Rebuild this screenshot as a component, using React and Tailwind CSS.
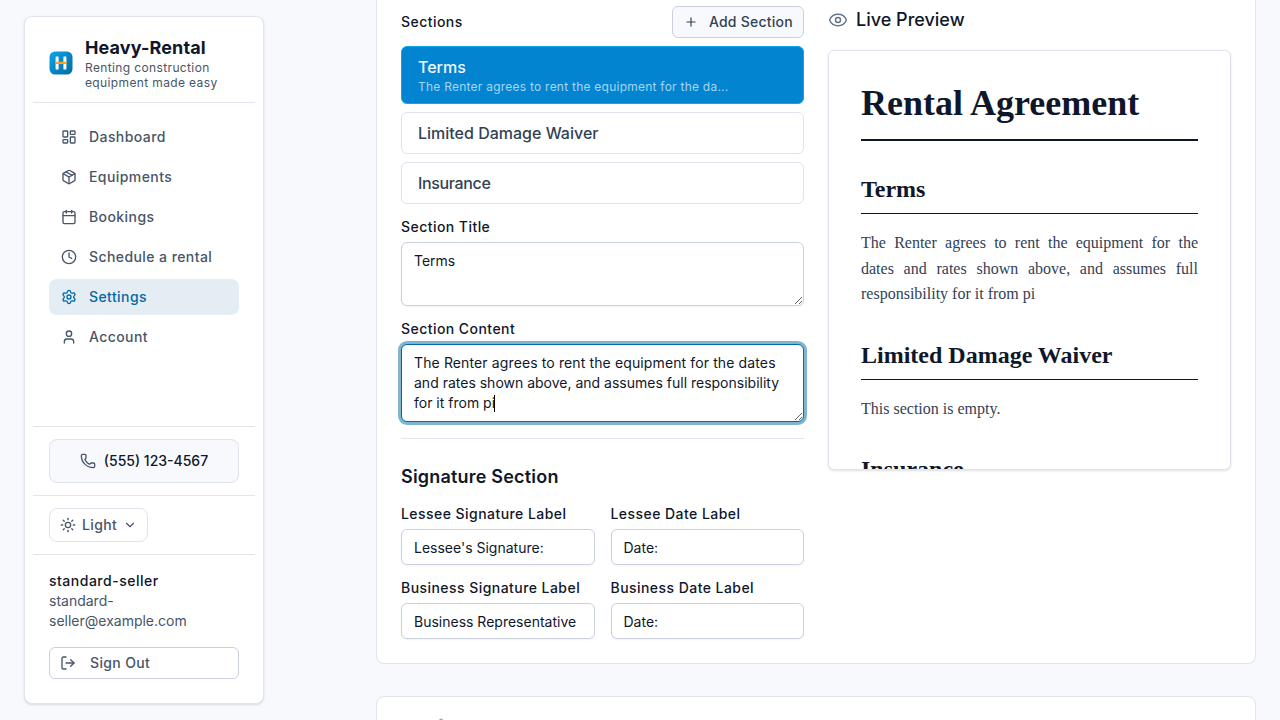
import React from 'react'
import {
  LayoutDashboard, Package, Calendar, Clock, Settings, User,
  Phone, Sun, ChevronDown, LogOut, Plus, Eye, Shield,
} from 'lucide-react'

const NAV = [
  { label: 'Dashboard', icon: LayoutDashboard },
  { label: 'Equipments', icon: Package },
  { label: 'Bookings', icon: Calendar },
  { label: 'Schedule a rental', icon: Clock },
  { label: 'Settings', icon: Settings, active: true },
  { label: 'Account', icon: User },
]

const CONTENT = 'The Renter agrees to rent the equipment for the dates and rates shown above, and assumes full responsibility for it from pi'

const SECTIONS = [
  { title: 'Terms', content: CONTENT },
  { title: 'Limited Damage Waiver', content: '' },
  { title: 'Insurance', content: '', className: 'tracking-[-0.35px]' },
]

const SIGNATURE_FIELDS = [
  { id: 'lesseeSig', label: 'Lessee Signature Label', value: "Lessee's Signature:" },
  { id: 'lesseeDate', label: 'Lessee Date Label', value: 'Date:' },
  { id: 'businessSig', label: 'Business Signature Label', value: 'Business Representative Signature:' },
  { id: 'businessDate', label: 'Business Date Label', value: 'Date:' },
]

function Logo() {
  return (
    <svg width="24" height="24" viewBox="0 0 24 24" className="shrink-0">
      <defs>
        <linearGradient id="logoBg" x1="0" y1="0" x2="1" y2="1">
          <stop offset="0" stopColor="#0ea5e9" />
          <stop offset="1" stopColor="#0369a1" />
        </linearGradient>
      </defs>
      <rect x="0.5" y="0.5" width="23" height="23" rx="5.5" fill="url(#logoBg)" />
      <rect x="6.6" y="5.6" width="3" height="12.8" rx="0.4" fill="#fff" />
      <rect x="14.4" y="5.6" width="3" height="12.8" rx="0.4" fill="#fff" />
      <rect x="6.6" y="10.8" width="11" height="2.2" rx="0.4" fill="#fba31a" />
    </svg>
  )
}

function Label({ children }) {
  return <div className="text-sm leading-none font-medium tracking-[0.45px] text-[#0f172a]">{children}</div>
}

function Sidebar() {
  return (
    <aside className="w-60 h-[688px] shrink-0 flex flex-col p-2 bg-white border border-[#dfe3ee] rounded-lg shadow-sm">
      <div className="flex items-center gap-3 px-4 py-3 border-b border-[#e2e5ee]">
        <Logo />
        <div>
          <div className="text-lg leading-tight font-bold tracking-[0.12px] text-[#0f172a]">Heavy-Rental</div>
          <div className="text-xs leading-tight tracking-[0.37px] text-[#475569]">Renting construction equipment made easy</div>
        </div>
      </div>

      <nav className="flex-1 flex flex-col gap-1 px-4 pt-4">
        {NAV.map(({ label, icon: Icon, active }) => (
          <a key={label} className={[
            'flex items-center gap-3 h-9 px-3 rounded-lg text-sm font-medium tracking-[0.42px]',
            active ? 'bg-[#e4edf4] text-[#0369a1]' : 'text-[#475569]',
          ].join(' ')}>
            <Icon size={16} />
            {label}
          </a>
        ))}
      </nav>

      <div className="px-4 py-3 border-t border-[#e2e5ee]">
        <div className="h-11 flex items-center justify-center gap-2 rounded-lg border border-[#dfe3ee] bg-[#f8f9fd] text-sm font-medium text-[#0f172a]">
          <Phone size={16} className="text-[#475569]" />
          (555) 123-4567
        </div>
      </div>

      <div className="px-4 py-3 border-t border-[#e2e5ee]">
        <button className="flex items-center gap-1.5 h-[34px] px-2.5 rounded-lg border border-[#dfe3ee] text-sm font-medium tracking-[0.35px] text-[#475569]">
          <Sun size={16} />
          Light
          <ChevronDown size={14} />
        </button>
      </div>

      <div className="px-4 py-4 border-t border-[#e2e5ee]">
        <div className="text-sm font-medium tracking-[0.5px] text-[#0f172a]">standard-seller</div>
        <div className="text-sm text-[#475569]">standard-<br />seller@example.com</div>
        <button className="mt-4 w-full h-8 flex items-center gap-3.5 px-2.5 rounded-md border border-[#cbd0e0] text-sm font-medium tracking-[0.35px] text-[#475569]">
          <LogOut size={16} />
          Sign Out
        </button>
      </div>
    </aside>
  )
}

function SectionEditor() {
  return (
    <div className="min-w-0">
      <div className="flex items-center justify-between">
        <Label>Sections</Label>
        <button className="h-8 flex items-center gap-[11px] pl-[11px] pr-2.5 rounded-md border border-[#cbd0e0] bg-[#f8f9fd] text-sm font-medium tracking-[0.25px] text-[#334155]">
          <Plus size={14} />
          Add Section
        </button>
      </div>

      <div className="mt-2 space-y-2">
        {SECTIONS.map((s, i) => (
          <div key={s.title} className={[
            'px-4 py-2 rounded-md border',
            i === 0 ? 'bg-[#0284d1] border-[#0ea5e9] text-[#f0f9ff]' : 'bg-white border-[#dfe3ee] text-[#334155]',
          ].join(' ')}>
            <div className={['text-base font-medium', s.className].join(' ')}>{s.title}</div>
            {s.content && <div className="text-xs tracking-[0.24px] text-[#a5d6f3]">{s.content.slice(0, 50)}...</div>}
          </div>
        ))}
      </div>

      <div className="mt-4 space-y-2">
        <Label>Section Title</Label>
        <textarea
          defaultValue="Terms"
          className="block w-full h-16 px-3 py-2 resize-y rounded-md border border-[#cbd0e0] bg-white text-sm text-[#0f172a] shadow-xs"
        />
      </div>

      <div className="mt-4 space-y-2">
        <Label>Section Content</Label>
        <div className="h-[78px] px-3 py-2 resize-y overflow-hidden rounded-md border border-[#0369a1] bg-white ring-3 ring-[#0369a1]/50 text-sm text-[#0f172a] first-line:tracking-[0.12px]">
          {CONTENT}
          <span className="inline-block w-px h-[17px] -ml-px align-[-4px] bg-black" />
        </div>
      </div>

      {/* Signature labels */}
      <div className="mt-4 pt-6 border-t border-[#e2e5ee]">
        <div className="text-lg font-semibold tracking-[0.2px] text-[#0f172a]">Signature Section</div>
        <div className="mt-4 grid grid-cols-2 gap-4">
          {SIGNATURE_FIELDS.map(f => (
            <div key={f.id} className="min-w-0 space-y-2">
              <Label>{f.label}</Label>
              <input
                type="text" defaultValue={f.value}
                className="block w-full h-9 pl-3 pr-3.5 rounded-md border border-[#cbd0e0] bg-white text-sm text-[#0f172a] shadow-xs"
              />
            </div>
          ))}
        </div>
      </div>
    </div>
  )
}

function Preview() {
  return (
    <div className="min-w-0">
      <div className="flex items-center gap-2 h-7 text-lg font-medium text-[#0f172a]">
        <Eye size={20} strokeWidth={1.75} className="text-[#64748b]" />
        Live Preview
      </div>
      <div className="mt-4 h-[420px] overflow-hidden p-8 rounded-md border border-[#dfe3ee] bg-white shadow-sm font-['Liberation_Serif',serif]">
        <h1 className="pb-4 border-b-2 border-[#0f172a] text-4xl font-bold text-[#0f172a]">Rental Agreement</h1>
        {SECTIONS.map(s => (
          <div key={s.title} className="mt-8">
            <h2 className="pb-2 border-b border-[#0f172a] text-2xl font-bold text-[#0f172a]">{s.title}</h2>
            <p className="mt-4 text-base leading-[1.6] text-justify text-[#334155]">{s.content || 'This section is empty.'}</p>
          </div>
        ))}
      </div>
    </div>
  )
}

export default function App() {
  return (
    <div className="w-[1280px] h-[720px] overflow-hidden flex bg-[#f8f9fd] font-['Inter',sans-serif]">
      <div className="pt-4 pl-6">
        <Sidebar />
      </div>
      <main className="ml-28 w-[880px] shrink-0">
        <div className="grid grid-cols-2 gap-6 px-6 pt-1.5 pb-6 bg-white border-x border-b border-[#dfe3ee] rounded-b-lg">
          <SectionEditor />
          <Preview />
        </div>
        {/* Next settings card, mostly below the fold */}
        <div className="mt-8 h-40 pt-[21px] pl-14 bg-white border border-[#dfe3ee] rounded-lg">
          <Shield size={16} className="text-[#94a3b8]" />
        </div>
      </main>
    </div>
  )
}
